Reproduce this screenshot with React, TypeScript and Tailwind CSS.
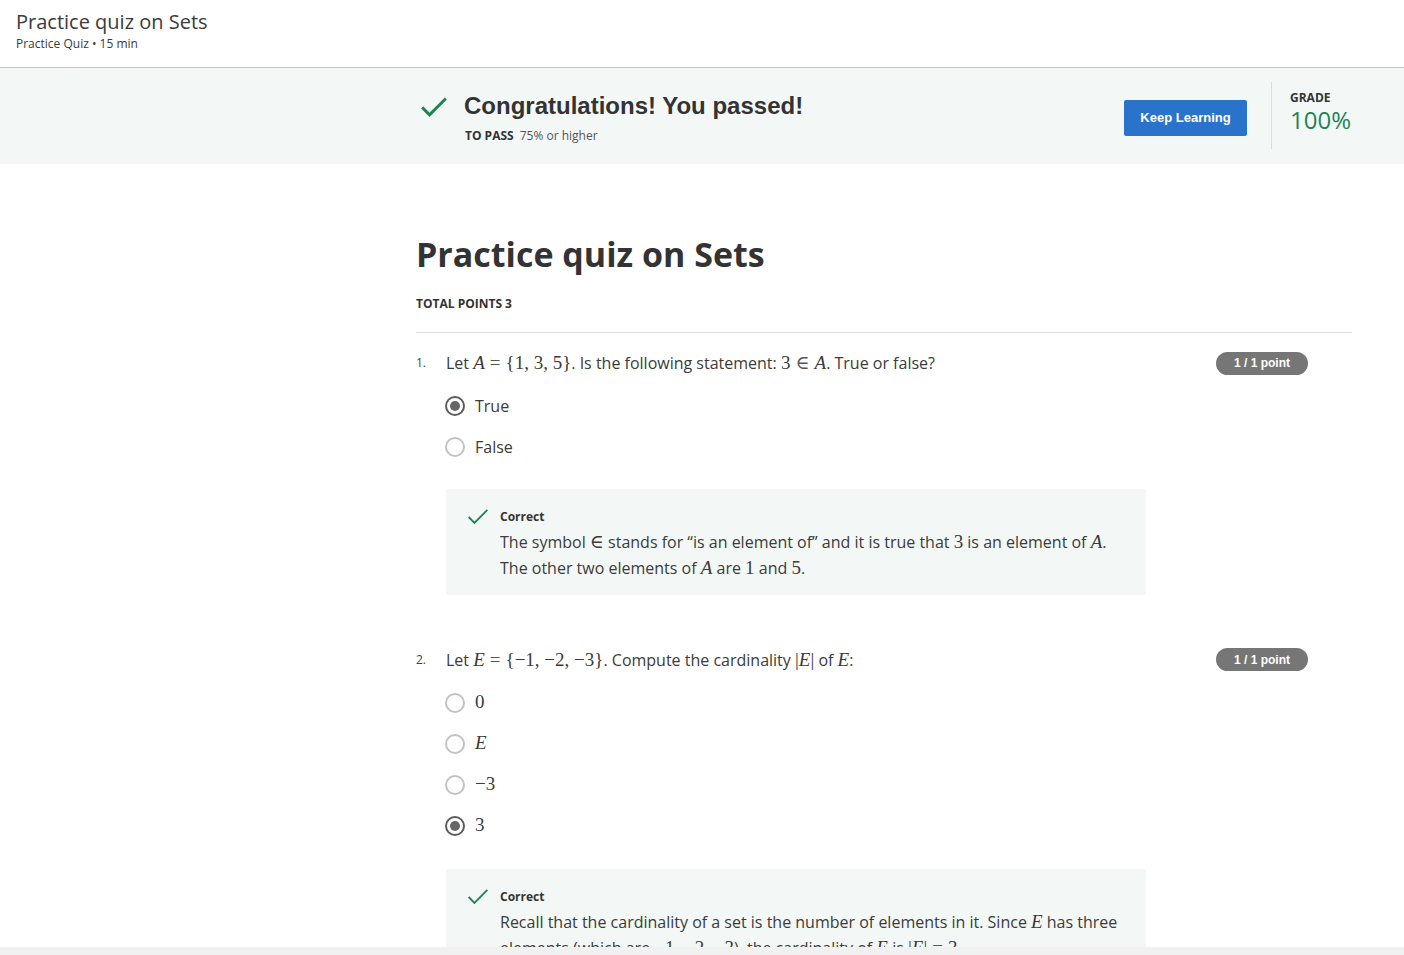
import React from "react";

const Check = ({ size = 28, stroke = 3 }: { size?: number; stroke?: number }) => (
    <svg width={size} height={size * 0.78} viewBox="0 0 28 22" fill="none">
        <path d="M2 11.5 L9.5 19 L26 2.5" stroke="#1f8354" strokeWidth={stroke} strokeLinecap="butt" strokeLinejoin="miter" />
    </svg>
);

const M = ({ children }: { children: React.ReactNode }) => (
    <span className="font-['Liberation_Serif','DejaVu_Serif',serif] text-[19px]">{children}</span>
);
const V = ({ children }: { children: React.ReactNode }) => (
    <span className="font-['Liberation_Serif','DejaVu_Serif',serif] text-[19px] italic">{children}</span>
);
// relation symbols get the wider spacing that typeset math has
const Op = ({ children }: { children: React.ReactNode }) => (
    <span className="mx-[5px] font-['Liberation_Serif','DejaVu_Serif',serif] text-[19px] text-[#555]">{children}</span>
);

const Radio = ({ checked, children }: { checked?: boolean; children: React.ReactNode }) => (
    <div className="flex items-center h-[41px]">
        <span
            className={
                checked
                    ? "w-5 h-5 rounded-full border-2 border-[#5c5c5c] flex items-center justify-center"
                    : "w-5 h-5 rounded-full border-2 border-[#c2c2c2]"
            }
        >
            {checked && <span className="w-[10px] h-[10px] rounded-full bg-[#666]" />}
        </span>
        <span className="ml-[10px] text-[16px] text-[#3b3b3b]">{children}</span>
    </div>
);

const Badge = () => (
    <div className="w-[92px] h-[23px] rounded-full bg-[#767676] text-white text-[12px] font-bold font-['Liberation_Sans',Arial,sans-serif] flex items-center justify-center">
        1 / 1 point
    </div>
);

const Feedback = ({ children }: { children: React.ReactNode }) => (
    <div className="ml-[30px] w-[700px] bg-[#f3f8f6] pl-[21px] pr-5 pt-[18px] pb-[14px] flex">
        <div className="pt-[1px]">
            <Check size={22} stroke={2.4} />
        </div>
        <div className="ml-[11px]">
            <div className="text-[12px] font-bold text-[#333] leading-[20px]">Correct</div>
            <div className="text-[16px] text-[#3b3b3b] leading-[25px] mt-[2px]">{children}</div>
        </div>
    </div>
);

const App = () => {
    return (
        <div className="h-screen flex flex-col overflow-hidden bg-white font-['Open_Sans',sans-serif] text-[#333]">
            <header className="h-[68px] shrink-0 border-b border-[#bfc7c7] pl-4 pt-[8px]">
                <div className="text-[20px] leading-[28px] text-[#3b3b3b]">Practice quiz on Sets</div>
                <div className="text-[12px] leading-[16px] text-[#3b3b3b]">Practice Quiz • 15 min</div>
            </header>

            <div className="h-[96px] shrink-0 bg-[#f3f8f6] flex">
                <div className="w-[420px] shrink-0" />
                <div className="pt-[28px]">
                    <Check size={28} stroke={3} />
                </div>
                <div className="ml-4 pt-[22px]">
                    <div className="text-[24px] leading-[32px] font-bold font-['Liberation_Sans',Arial,sans-serif] text-[#333]">
                        Congratulations! You passed!
                    </div>
                    <div className="mt-[6px] text-[12px] leading-[16px] ml-[1px]">
                        <span className="font-bold text-[#333]">TO PASS</span>
                        <span className="ml-[6px] text-[#555]">75% or higher</span>
                    </div>
                </div>
                <div className="flex-1" />
                <div className="pt-[32px]">
                    <button className="w-[123px] h-[36px] rounded-[2px] bg-[#2a73cc] text-white text-[13px] font-bold font-['Liberation_Sans',Arial,sans-serif]">
                        Keep Learning
                    </button>
                </div>
                <div className="ml-[24px] mt-[14px] h-[67px] border-l border-[#d9dddd]" />
                <div className="ml-[18px] pt-[23px] w-[114px]">
                    <div className="text-[12px] font-bold leading-[14px] text-[#333]">GRADE</div>
                    <div className="mt-[2px] text-[24px] leading-[26px] text-[#1f8354]">100%</div>
                </div>
            </div>

            <main className="flex-1 overflow-hidden flex">
                <div className="w-[416px] shrink-0" />
                <div className="w-[936px]">
                    <h1 className="mt-[66px] text-[34px] leading-[48px] font-bold text-[#333]">Practice quiz on Sets</h1>
                    <div className="mt-[18px] text-[12px] font-bold leading-[16px] text-[#333]">TOTAL POINTS 3</div>
                    <div className="mt-[20px] border-t border-[#dcdcdc]" />

                    <section className="mt-[16px]">
                        <div className="flex items-center pr-[44px]">
                            <span className="w-[30px] text-[12px] text-[#444]">1.</span>
                            <span className="flex-1 text-[16px] text-[#3b3b3b]">
                                Let <V>A</V><Op>=</Op><M>{"{"}1, 3, 5{"}"}</M>. Is the following statement: <M>3</M><Op>∈</Op><V>A</V>. True or false?
                            </span>
                            <Badge />
                        </div>
                        <div className="ml-[29px] mt-[8px]">
                            <Radio checked>True</Radio>
                            <Radio>False</Radio>
                        </div>
                        <div className="mt-[21px]">
                            <Feedback>
                                The symbol <M>∈</M> stands for “is an element of” and it is true that <M>3</M> is an element of <V>A</V>.
                                <br />
                                The other two elements of <V>A</V> are <M>1</M> and <M>5</M>.
                            </Feedback>
                        </div>
                    </section>

                    <section className="mt-[51px]">
                        <div className="flex items-center pr-[44px]">
                            <span className="w-[30px] text-[12px] text-[#444]">2.</span>
                            <span className="flex-1 text-[16px] text-[#3b3b3b]">
                                Let <V>E</V><Op>=</Op><M>{"{"}−1, −2, −3{"}"}</M>. Compute the cardinality <M>|</M><V>E</V><M>|</M> of <V>E</V>:
                            </span>
                            <Badge />
                        </div>
                        <div className="ml-[29px] mt-[8px]">
                            <Radio><M>0</M></Radio>
                            <Radio><V>E</V></Radio>
                            <Radio><M>−3</M></Radio>
                            <Radio checked><M>3</M></Radio>
                        </div>
                        <div className="mt-[23px]">
                            <Feedback>
                                Recall that the cardinality of a set is the number of elements in it. Since <V>E</V> has three
                                <br />
                                elements (which are <M>−1, −2, −3</M>), the cardinality of <V>E</V> is <M>|</M><V>E</V><M>|</M><Op>=</Op><M>3</M>.
                            </Feedback>
                        </div>
                    </section>
                </div>
            </main>
            <div className="h-[8px] shrink-0 bg-[#f1f1f1]" />
        </div>
    );
};

export default App;
